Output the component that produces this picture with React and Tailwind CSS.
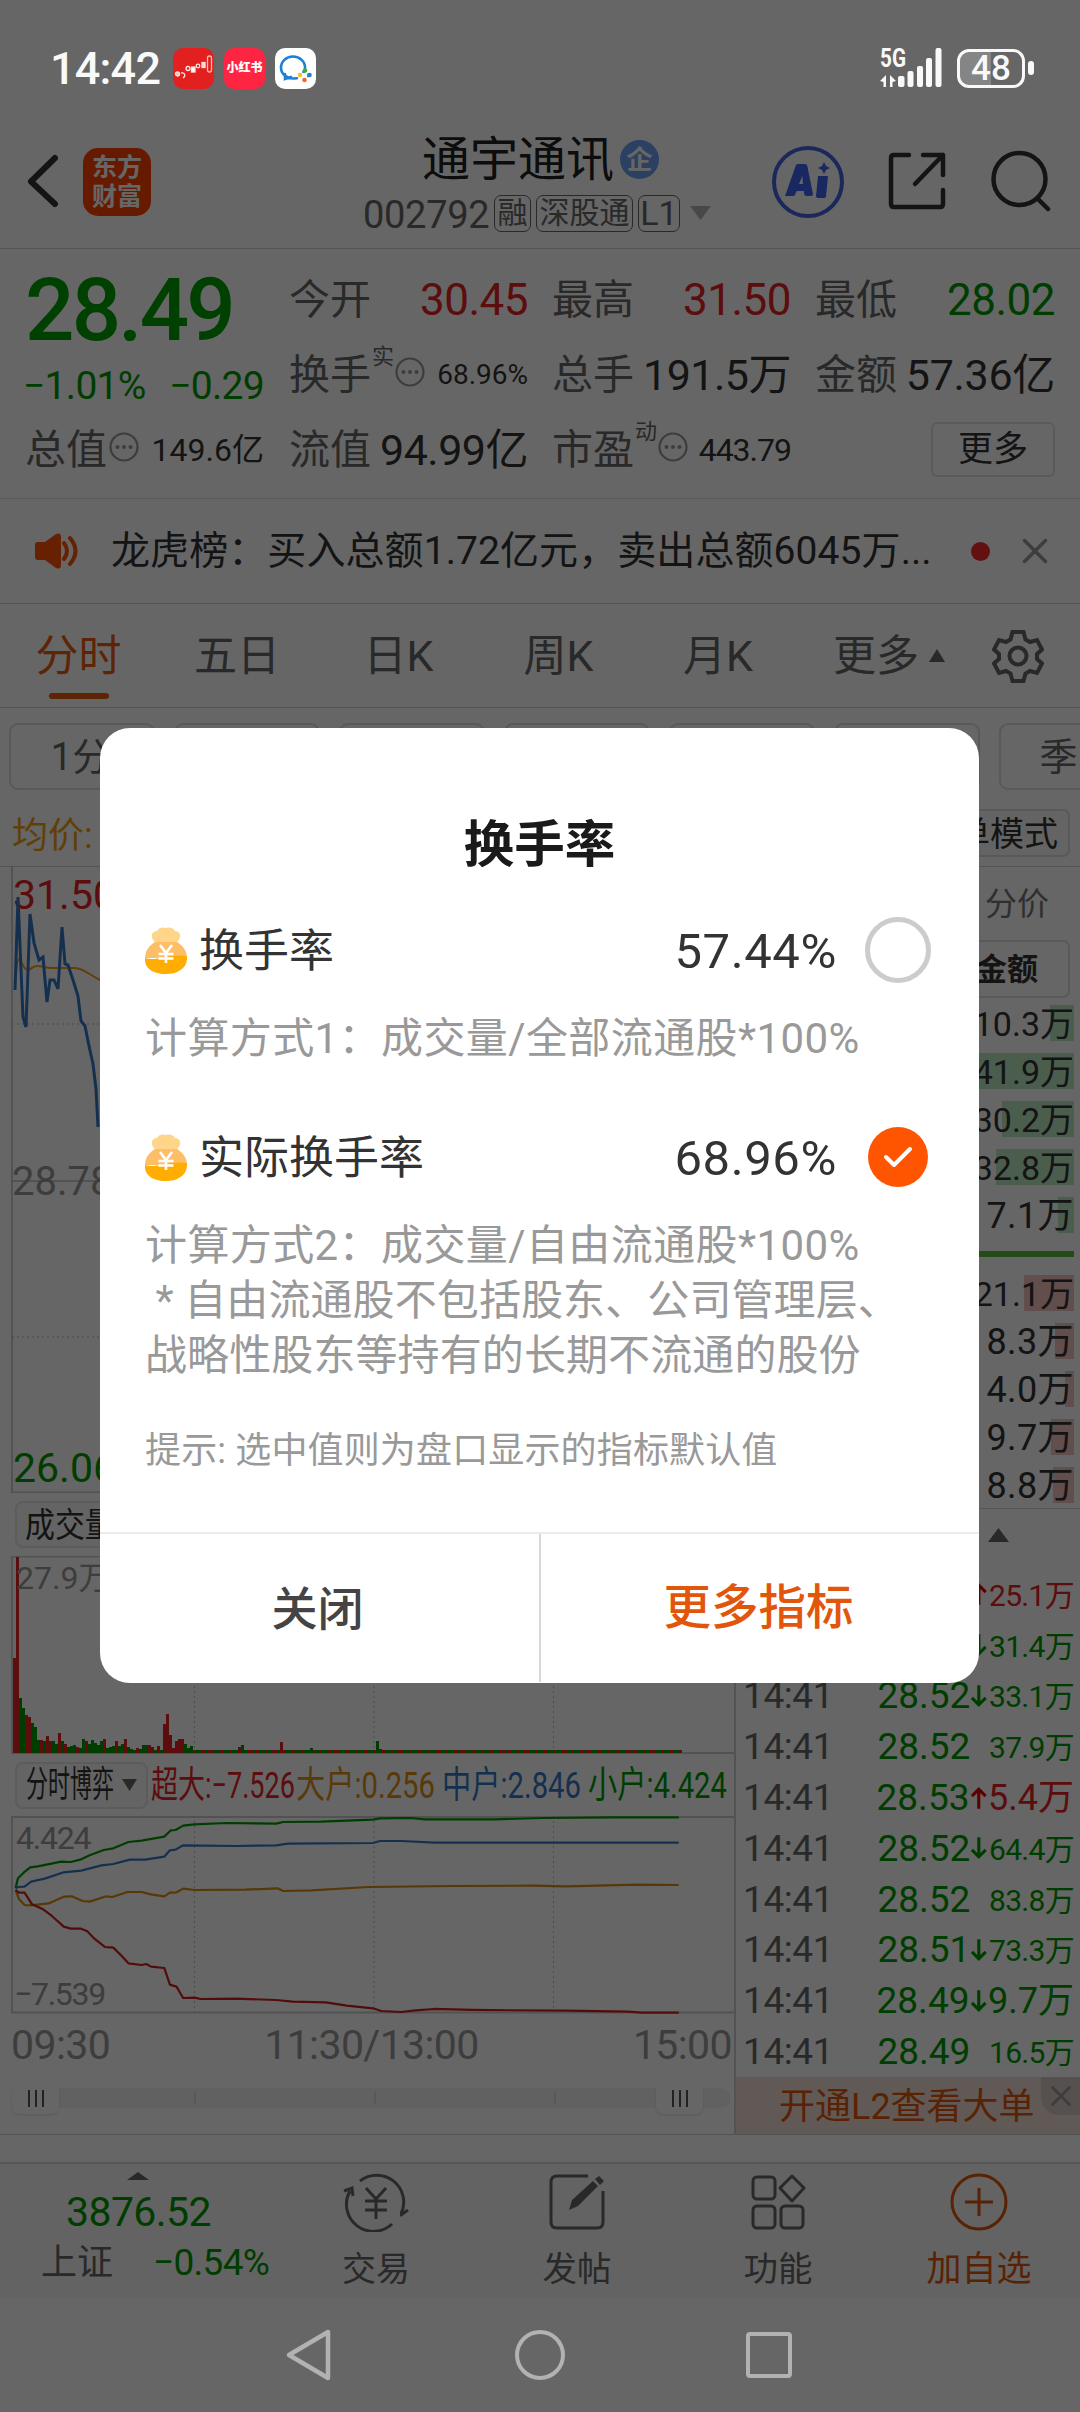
import { X } from "lucide-react"

const volume = [
  "r95", "r196", "g55", "g45", "r38", "r36", "g30", "g26", "g13", "r13", "g12", "r17", "r12", "g12", "g9",
  "r20", "g12", "r9", "g6", "g7", "g8", "r6", "g5", "g14", "r12", "g9", "g13", "g10", "g8", "g12",
  "r14", "g5", "g6", "g7", "r12", "g7", "g9", "r14", "g6", "g4", "g3", "r5", "g4", "g8", "g8",
  "r8", "r6", "g3", "r7", "g3", "r29", "r39", "r18", "r5", "r12", "r14", "r14", "g9", "g5", "g7",
]

const spikes = { 75: "r6", 76: "g8", 89: "r11", 99: "g5", 121: "g12", 122: "g4" }

for (let i = volume.length; i < 223; i++) {
  volume.push(spikes[i] || (i % 3 === 0 || i % 7 === 2 ? "r3" : "g3"))
}

const flows = [
  {
    color: "#009a00",
    points: "33,415 38,385 50,368 64,352 80,349 130,335 150,336 172,328 190,316 220,300 240,295 272,276 300,272 348,260 362,241 372,240 388,227 412,223 480,219 585,221 600,216 680,215 790,209 805,205 870,204 900,208 1050,208 1150,204 1300,202 1438,202",
  },
  {
    color: "#3579c6",
    points: "33,415 38,411 52,410 66,395 95,386 135,367 172,362 215,346 240,342 275,329 308,329 348,320 360,301 372,299 388,286 500,288 585,286 610,281 790,279 805,273 850,273 920,278 1438,278",
  },
  {
    color: "#d98c10",
    points: "33,420 40,447 52,465 64,466 104,460 135,440 152,439 175,453 190,455 225,439 238,441 270,426 300,426 320,433 348,439 360,428 374,427 388,416 412,420 520,419 588,415 600,423 660,421 780,411 960,408 1130,407 1200,409 1350,404 1438,405",
  },
  {
    color: "#d02020",
    points: "33,420 40,428 52,428 68,463 90,477 110,498 135,530 150,536 172,536 185,544 200,566 222,591 240,593 258,618 272,640 300,645 310,642 320,650 348,654 360,704 374,710 388,744 412,743 425,747 500,746 585,750 620,755 690,757 735,767 790,775 808,783 850,786 880,781 920,777 1000,780 1200,782 1330,785 1360,788 1438,788",
  },
]

const buyRows = [
  { amount: "10.3万", bar: 24 },
  { amount: "41.9万", bar: 102 },
  { amount: "30.2万", bar: 72 },
  { amount: "32.8万", bar: 78 },
  { amount: "7.1万", bar: 16 },
]

const sellRows = [
  { amount: "21.1万", bar: 50 },
  { amount: "8.3万", bar: 19 },
  { amount: "4.0万", bar: 9 },
  { amount: "9.7万", bar: 23 },
  { amount: "8.8万", bar: 21 },
]

const trades = [
  { price: "28.53", dir: "up", amount: "25.1万" },
  { price: "28.52", dir: "down", amount: "31.4万" },
  { price: "28.52", dir: "down", amount: "33.1万" },
  { price: "28.52", dir: "", amount: "37.9万" },
  { price: "28.53", dir: "up", amount: "5.4万" },
  { price: "28.52", dir: "down", amount: "64.4万" },
  { price: "28.52", dir: "", amount: "83.8万" },
  { price: "28.51", dir: "down", amount: "73.3万" },
  { price: "28.49", dir: "down", amount: "9.7万" },
  { price: "28.49", dir: "", amount: "16.5万" },
]

function StatusBar() {
  return (
    <div className="relative z-20 flex h-[108px] items-center pt-[28px] pl-[50px] pr-[46px] text-[#f9f9f9]">
      <span className="w-[123px] text-[45px] font-medium leading-none tracking-[-0.800px]">14:42</span>
      <div className="flex gap-[10px]">
        <div className="h-[41px] w-[41px] rounded-[10px] bg-[#e2201f]">
          <svg viewBox="0 0 41 41" className="h-full w-full" fill="none" stroke="#ffe3e0" strokeWidth="1.300">
            <circle cx="4.500" cy="26" r="2" fill="#fbb" />
            <path d="M8 25c4-1 5 3 2 5" />
            <circle cx="15" cy="20.500" r="2" />
            <rect x="18.500" y="19" width="3.500" height="5" fill="#fff" />
            <circle cx="25" cy="18" r="1.800" />
            <rect x="29" y="14.500" width="3" height="5" fill="#fcc" />
            <rect x="34.500" y="8" width="4" height="16" rx="2" stroke="#fba" />
          </svg>
        </div>
        <div className="flex h-[41px] w-[41px] items-center justify-center rounded-[10px] bg-[#ff2442] text-[12px] font-black leading-none text-white">
          小红书
        </div>
        <div className="h-[41px] w-[41px] rounded-[10px] bg-white">
          <svg viewBox="0 0 41 41" className="h-full w-full" fill="none">
            <path d="M30 20a12 11 0 1 0-11 10.500l3-.3M10 26l0 5 6-2" stroke="#1d7fd6" strokeWidth="2.600" strokeLinecap="round" />
            <path d="M28 25l2-3M32 28l3-1" stroke="#1d7fd6" strokeWidth="3" />
            <circle cx="30" cy="22.500" r="2.300" fill="#3fae2a" />
            <circle cx="34.500" cy="27" r="2.300" fill="#1d7fd6" />
            <circle cx="29.500" cy="32" r="2.300" fill="#ef6a2a" />
            <circle cx="25" cy="27" r="2.300" fill="#fbc02d" />
            <circle cx="29.800" cy="27.200" r="2.300" fill="#fff" />
          </svg>
        </div>
      </div>
      <svg viewBox="0 0 62 40" className="ml-auto h-[40px] w-[62px] overflow-visible" fill="#f9f9f9">
        <text x="0" y="19" fontSize="26" fontWeight="700" textLength="26" lengthAdjust="spacingAndGlyphs">5G</text>
        <path d="M0 33l6-6v12h-2.500v-5zM16 33l-6-6v12h2.500v-5z" />
        <rect x="18" y="28" width="6.500" height="11" rx="2" />
        <rect x="27.500" y="23" width="6" height="16" rx="2" />
        <rect x="37" y="18" width="6" height="21" rx="2" />
        <rect x="46" y="10" width="6" height="29" rx="2" />
        <rect x="55.500" y="0" width="6" height="39" rx="2" />
      </svg>
      <div className="ml-[15px] flex h-[39px] w-[68px] items-center justify-center rounded-[12px] border-[3px] border-[#f9f9f9] bg-[linear-gradient(90deg,#858585_50%,transparent_50%)] text-[35px] font-medium leading-none">
        48
      </div>
      <div className="ml-[3px] h-[14px] w-[6px] rounded-[3px] bg-[#f9f9f9]" />
    </div>
  )
}

function Header() {
  return (
    <div className="flex h-[141px] items-start border-b border-[#d0d0d0]">
      <svg viewBox="0 0 32 54" className="ml-[27px] mt-[46px] h-[54px] w-[32px]" fill="none" stroke="#333" strokeWidth="6" strokeLinecap="round" strokeLinejoin="round">
        <path d="M28 4L4 27.500l24 22.500" />
      </svg>
      <div className="ml-[24px] mt-[40px] flex h-[68px] w-[68px] flex-col items-center justify-center rounded-[15px] bg-[#ff4400] text-[25px] font-bold leading-[29px] text-white">
        <span>东方</span>
        <span>财富</span>
      </div>
      <div className="ml-[211px] mt-[21px] flex w-[355px] flex-col items-start">
        <div className="ml-[60px] flex h-[60px] items-center pt-[1px] text-[48px] leading-none text-[#222]">
          通宇通讯
          <span className="ml-[6px] flex h-[39px] w-[39px] items-center justify-center rounded-full bg-[#6ea0f5] text-[26px] font-bold text-white">企</span>
        </div>
        <div className="mt-[5px] flex h-[38px] items-center text-[38px] leading-none text-[#666]">
          <span className="w-[132px] pt-[3px] pl-[1px] tracking-[-0.300px]">002792</span>
          <span className="mr-[5px] flex h-[37px] w-[37px] items-center justify-center rounded-[7px] border border-[#666] text-[30px]">融</span>
          <span className="mr-[5px] flex h-[37px] w-[97px] items-center justify-center rounded-[7px] border border-[#666] text-[30px]">深股通</span>
          <span className="flex h-[37px] w-[42px] items-center justify-center rounded-[7px] border border-[#666] text-[34px]">L1</span>
          <svg viewBox="0 0 21 14" className="ml-[10px] h-[14px] w-[21px]" fill="#b5b5b5">
            <path d="M0 0h21L10.500 14z" />
          </svg>
        </div>
      </div>
      <svg viewBox="0 0 74 74" className="ml-[54px] mt-[37px] h-[74px] w-[74px]">
        <circle cx="37" cy="37" r="34" fill="none" stroke="#4364e0" strokeWidth="4" />
        <path d="M14 51L25 20q.5-1 2-1h7q2 0 2.300 2L42 49q0 2-2 2h-5q-1.500 0-1.800-2l-.5-3h-7l-1.500 3.500q-.8 1.500-2 1.500zM28 39h4l-.7-8z" fill="#4364f5" fillRule="evenodd" />
        <path d="M47 31h9q1 0 1 1l-2 19q0 2-2 2h-6q-2 0-2-2z" fill="#4364f5" />
        <path d="M53 17l2 4 4 2-4 2-2 4-2-4-4-2 4-2z" fill="#4364f5" />
      </svg>
      <svg viewBox="0 0 60 60" className="ml-[42px] mt-[43px] h-[60px] w-[60px]" fill="none" stroke="#333" strokeWidth="4.500" strokeLinecap="round" strokeLinejoin="round">
        <path d="M22 4H7q-3 0-3 3v46q0 3 3 3h46q3 0 3-3V39M36 4h20v20M56 4L28 33" />
      </svg>
      <svg viewBox="0 0 60 62" className="ml-[44px] mt-[42px] h-[62px] w-[60px]" fill="none" stroke="#333" strokeWidth="4.500" strokeLinecap="round">
        <circle cx="28.500" cy="29" r="26" />
        <path d="M47 49l10 10" />
      </svg>
    </div>
  )
}

function InfoDot({ className }) {
  return (
    <svg viewBox="0 0 30 30" className={className} fill="#999">
      <circle cx="15" cy="15" r="13.500" fill="none" stroke="#999" strokeWidth="2.200" />
      <circle cx="8.500" cy="15" r="2" />
      <circle cx="15" cy="15" r="2" />
      <circle cx="21.500" cy="15" r="2" />
    </svg>
  )
}

function Cell({ label, sup, info, value, className }) {
  return (
    <div className="flex h-[75px] items-center justify-between pt-[1px] leading-none">
      <div className="flex items-center text-[41px] text-[#666]">
        {label}
        {sup && <span className="-mt-[36px] ml-[1px] text-[22px]">{sup}</span>}
        {info && <InfoDot className={sup ? "-mt-[7px] ml-[1px] h-[30px] w-[30px]" : "-mt-[7px] ml-[2px] h-[30px] w-[30px]"} />}
      </div>
      <span className={className}>{value}</span>
    </div>
  )
}

function Quote() {
  return (
    <div className="grid h-[250px] grid-cols-[239px_238px_237px_238px] gap-x-[26px] border-b border-[#e0e0e0] pl-[25px] pt-[13px]">
      <div>
        <div className="flex h-[95px] items-center pt-[2px] text-[87px] font-medium leading-none tracking-[-2.800px] text-[#00a000]">28.49</div>
        <div className="flex h-[55px] items-center justify-between pt-[3px] text-[39px] leading-none tracking-[-0.700px] text-[#009a00]">
          <span className="-ml-[2px]">−1.01%</span>
          <span>−0.29</span>
        </div>
        <Cell label="总值" info value="149.6亿" className="text-[32px] text-[#333]" />
      </div>
      <div className="-ml-[1px]">
        <Cell label="今开" value="30.45" className="text-[44px] tracking-[-0.500px] text-[#e62222]" />
        <Cell label="换手" sup="实" info value="68.96%" className="text-[28px] text-[#333]" />
        <Cell label="流值" value="94.99亿" className="text-[43px] tracking-[-0.500px] text-[#333]" />
      </div>
      <div className="-ml-[2px]">
        <Cell label="最高" value="31.50" className="text-[44px] tracking-[-0.500px] text-[#e62222]" />
        <Cell label="总手" value="191.5万" className="text-[43px] tracking-[-0.500px] text-[#333]" />
        <Cell label="市盈" sup="动" info value="443.79" className="text-[32px] tracking-[-1px] text-[#333]" />
      </div>
      <div className="-ml-[2px]">
        <Cell label="最低" value="28.02" className="text-[44px] tracking-[-0.500px] text-[#009a00]" />
        <Cell label="金额" value="57.36亿" className="text-[43px] tracking-[-0.300px] text-[#333]" />
        <div className="flex h-[75px] items-center justify-end">
          <div className="flex h-[55px] w-[124px] items-center justify-center rounded-[6px] border-2 border-[#e2e2e2] text-[35px] leading-none text-[#333]">更多</div>
        </div>
      </div>
    </div>
  )
}

function Notice() {
  return (
    <div className="flex h-[105px] items-center border-b border-[#cfcfcf] pl-[33px] pr-[24px]">
      <svg viewBox="0 0 46 38" className="h-[38px] w-[46px]" fill="#fc5404">
        <path d="M2 13q0-3 3-3h7L23 2q5-2 5 3v28q0 5-5 3l-11-8H5q-3 0-3-3z" />
        <path d="M31 11q6 8 0 16M37 6q11 13 0 26" fill="none" stroke="#fc5404" strokeWidth="4" strokeLinecap="round" />
      </svg>
      <span className="ml-[32px] whitespace-nowrap text-[39px] leading-none tracking-[0.080px] text-[#333]">龙虎榜：买入总额1.72亿元，卖出总额6045万...</span>
      <span className="ml-auto h-[19px] w-[19px] rounded-full bg-[#f52828]" />
      <X className="ml-[24px] h-[42px] w-[42px] text-[#999]" strokeWidth={2} />
    </div>
  )
}

function Tabs() {
  return (
    <div className="flex h-[104px] items-center border-b border-[#cfcfcf] text-[43px] leading-none text-[#666]">
      <div className="flex h-full w-[157px] flex-col items-center justify-between pb-[8px] pt-[31px] text-[#eb5a0f]">
        分时
        <span className="h-[6px] w-[60px] rounded-full bg-[#eb5a0f]" />
      </div>
      <span className="w-[160px] pt-[2px] text-center">五日</span>
      <span className="w-[163px] pt-[2px] text-center">日K</span>
      <span className="w-[157px] pt-[2px] text-center">周K</span>
      <span className="w-[162px] pt-[2px] text-center">月K</span>
      <span className="ml-[34px] pt-[2px]">更多</span>
      <svg viewBox="0 0 16 13" className="ml-[10px] h-[13px] w-[16px]" fill="#666">
        <path d="M8 0l8 13H0z" />
      </svg>
      <svg viewBox="0 0 52 54" className="ml-[47px] h-[54px] w-[52px]" fill="none" stroke="#666" strokeWidth="4">
        <path d="M20.500 3h11l2 7.500 4.500 2.500 7-2 5 9.500-5 4.500v5l5 4.500-5 9.500-7-2-4.500 2.500-2 7.500h-11l-2-7.500-4.500-2.500-7 2-5-9.500 5-4.500v-5l-5-4.500 5-9.500 7 2 4.500-2.500z" />
        <circle cx="26" cy="27" r="8.500" />
      </svg>
    </div>
  )
}

function Periods() {
  const periods = ["1分", "5分", "15分", "30分", "60分", "120分", "季K"]
  return (
    <div className="flex h-[82px] gap-[19px] overflow-hidden pl-[9px] pt-[15px]">
      {periods.map((p) => (
        <div key={p} className="flex h-[67px] w-[146px] shrink-0 items-center justify-center rounded-[9px] border-2 border-[#dedede] pr-[3px] text-[38px] leading-none text-[#666]">
          {p}
        </div>
      ))}
    </div>
  )
}

function PriceChart() {
  return (
    <svg viewBox="0 867 734 626" className="block h-[626px] w-[734px]">
      <path d="M12 867V1492.500H734" fill="none" stroke="#ccc" strokeWidth="2" />
      <path d="M12 1024H734M12 1337H734" stroke="#bbb" strokeDasharray="2 3" />
      <path d="M12 1181H734" stroke="#bbb" strokeWidth="1.500" />
      <text x="13" y="909" fontSize="41" fill="#e62222">31.50</text>
      <text x="12" y="1195" fontSize="40" fill="#999">28.78</text>
      <text x="13" y="1482" fontSize="41" fill="#009a00">26.06</text>
      <path d="M15 985q2-26 4-26c3 1 4 11 9 11 3 0 4-4 9-4 6 0 8 2 15 2h22c10 0 15 7 28 13" fill="none" stroke="#f0a012" strokeWidth="2" />
      <path d="M15 990l3-93 5 120 3 10 4-113 4 29 5 17 4-3 4 45 3-22 4 0 4 9 4-62 3 37 3 1 5 15 5 16 3 25 4 5 4 20 4 18 3 25 2 38" fill="none" stroke="#3579c6" strokeWidth="3" />
    </svg>
  )
}

function VolumeChart() {
  return (
    <svg viewBox="0 0 734 198" className="block h-[198px] w-[734px]">
      <path d="M734 .5H12V197H734" fill="none" stroke="#ccc" strokeWidth="2" />
      <path d="M194.500 0V198M374 0V198M553.500 0V198" stroke="#bbb" strokeDasharray="2 3" />
      {volume.map((v, i) => {
        const h = Number(v.slice(1))
        return <rect key={i} x={13 + i * 3} y={197 - h} width="3" height={h} fill={v[0] === "r" ? "#e62222" : "#009a00"} />
      })}
      <text x="16" y="33" fontSize="32" fill="#999">27.9万</text>
    </svg>
  )
}

function FlowChart() {
  return (
    <svg viewBox="0 0 734 198" className="block h-[198px] w-[734px]">
      <path d="M734 1H12V196.500H734" fill="none" stroke="#ccc" strokeWidth="2" />
      <path d="M194.500 0V198M374 0V198M553.500 0V198" stroke="#bbb" strokeDasharray="2 3" />
      <g fill="none" strokeWidth="2.200" strokeLinejoin="round" transform="translate(0 -66) scale(0.472 0.3333)">
        {flows.map((f) => (
          <polyline key={f.color} points={f.points} stroke={f.color} vectorEffect="non-scaling-stroke" />
        ))}
      </g>
      <text x="16" y="33" fontSize="32" letterSpacing="-1.200" fill="#999">4.424</text>
      <text x="14" y="189" fontSize="32" letterSpacing="-1.300" fill="#999">−7.539</text>
    </svg>
  )
}

function Handle({ className }) {
  return (
    <div className={className}>
      <span className="h-[17px] w-[2px] bg-[#555]" />
      <span className="h-[17px] w-[2px] bg-[#555]" />
      <span className="h-[17px] w-[2px] bg-[#555]" />
    </div>
  )
}

function Charts() {
  return (
    <div className="w-[734px] shrink-0 whitespace-nowrap leading-none">
      <PriceChart />
      <div className="flex h-[63px] items-center pl-[15px]">
        <div className="flex h-[47px] w-[140px] items-center rounded-[8px] border-2 border-[#e6e6e6] bg-[#fbfbfb] pl-[8px] text-[34px] text-[#333]">
          <span className="origin-left scale-x-88">成交量</span>
        </div>
      </div>
      <VolumeChart />
      <div className="flex h-[62px] items-center pl-[15px] text-[36px]">
        <div className="flex h-[47px] w-[133px] items-center rounded-[8px] border-2 border-[#e6e6e6] bg-[#fbfbfb] pl-[9px] text-[#333]">
          <span className="w-[96px] origin-left scale-x-61">分时博弈</span>
          <svg viewBox="0 0 15 12" className="h-[12px] w-[15px] shrink-0" fill="#666">
            <path d="M0 0h15L7.500 12z" />
          </svg>
        </div>
        <span className="ml-[3px] w-[145px] origin-left scale-x-[0.73] text-[37px] text-[#e62222]">超大:−7.526</span>
        <span className="w-[146px] origin-left scale-x-[0.79] text-[37px] text-[#e08e10]">大户:0.256</span>
        <span className="w-[146px] origin-left scale-x-[0.79] text-[37px] text-[#3579c6]">中户:2.846</span>
        <span className="w-[140px] origin-left scale-x-[0.79] text-[37px] text-[#009a00]">小户:4.424</span>
      </div>
      <FlowChart />
      <div className="flex h-[60px] items-center justify-between pl-[11px] pr-[2px] pt-[2px] text-[41px] tracking-[-0.600px] text-[#999]">
        <span>09:30</span>
        <span>11:30/13:00</span>
        <span>15:00</span>
      </div>
      <div className="flex h-[48px] items-center pl-[12px] pr-[3px]">
        <div className="flex h-[20px] w-full items-center rounded-full bg-[#f3f3f3]">
          <Handle className="flex h-[31px] w-[47px] items-center justify-center gap-[5px] rounded-[7px] bg-white shadow-sm" />
          <span className="ml-[135px] h-[12px] w-[2px] bg-[#dcdcdc]" />
          <span className="ml-[178px] h-[12px] w-[2px] bg-[#dcdcdc]" />
          <span className="ml-[178px] h-[12px] w-[2px] bg-[#dcdcdc]" />
          <Handle className="ml-[100px] flex h-[31px] w-[47px] items-center justify-center gap-[5px] rounded-[7px] bg-white shadow-sm" />
        </div>
      </div>
    </div>
  )
}

function Arrow({ dir }) {
  if (!dir) return <span className="w-[20px]" />
  return (
    <svg viewBox="0 0 20 24" className="h-[24px] w-[20px]" fill="none" stroke={dir === "up" ? "#e60000" : "#009a00"} strokeWidth="3.200">
      <path d={dir === "up" ? "M10 23V3M3 10l7-7 7 7" : "M10 1v20M3 14l7 7 7-7"} />
    </svg>
  )
}

function OrderRow({ row, className }) {
  return (
    <div className="flex h-[36px] w-full justify-end">
      <div className={className} style={{ width: row.bar }}>
        <span className={row.amount.length === 4 ? "whitespace-nowrap text-[36px] tracking-[0.400px]" : "whitespace-nowrap text-[34px]"}>{row.amount}</span>
      </div>
    </div>
  )
}

function OrderBook() {
  return (
    <div className="min-w-0 flex-1 border-l-2 border-[#cfcfcf] leading-none">
      <div className="flex h-[73px] items-center justify-end pr-[31px] text-[32px] text-[#777]">分价</div>
      <div className="ml-auto mr-[10px] flex h-[58px] w-[120px] items-center justify-end rounded-[7px] border-2 border-[#dedede] pr-[30px] text-[31px] font-bold text-[#333]">
        金额
      </div>
      <div className="flex h-[511px] flex-col gap-[12px] border-b border-[#d8d8d8] pr-[6px] pt-[7px]">
        {buyRows.map((row) => (
          <OrderRow key={row.amount} row={row} className="flex items-center justify-end bg-[#bce8be] pt-[2px] text-[#333]" />
        ))}
        <div className="my-[6px] h-[6px] w-full shrink-0 bg-[#5fb83c]" />
        {sellRows.map((row) => (
          <OrderRow key={row.amount} row={row} className="flex items-center justify-end bg-[#f4c3be] pt-[2px] text-[#333]" />
        ))}
      </div>
      <div className="flex h-[60px] items-start justify-end pr-[71px] pt-[19px]">
        <svg viewBox="0 0 21 14" className="h-[14px] w-[21px]" fill="#666">
          <path d="M10.500 0L21 14H0z" />
        </svg>
      </div>
      {trades.map((t, i) => (
        <div key={i} className="flex h-[50.800px] items-center pl-[7px] pr-[6px]">
          <span className="w-[137px] text-[37px] tracking-[-0.400px] text-[#666]">14:41</span>
          <span className="w-[92px] text-[37px] text-[#009a00]">{t.price}</span>
          <Arrow dir={t.dir} />
          <span className={`flex-1 whitespace-nowrap text-right ${t.amount.length === 4 ? "text-[36px]" : "pt-[3px] text-[30px] tracking-[-0.700px]"} ${t.dir === "up" ? "text-[#e62222]" : "text-[#009a00]"}`}>
            {t.amount}
          </span>
        </div>
      ))}
      <div className="flex h-[57px] items-start bg-[#f1ded4] pl-[43px]">
        <span className="flex h-full items-center whitespace-nowrap pt-[4px] text-[36px] text-[#e2560c]">开通L2查看大单</span>
        <div className="ml-auto flex h-[38px] w-[39px] shrink-0 items-center justify-center rounded-bl-[18px] bg-[#d6cac4]">
          <X className="h-[34px] w-[34px] text-[#999]" strokeWidth={2} />
        </div>
      </div>
    </div>
  )
}

function BottomBar() {
  return (
    <div className="flex h-[136px] border-t-2 border-[#d6d6d6] bg-[#f8f8f8] leading-none text-[#666]">
      <div className="flex w-[313px] flex-col pt-[8px]">
        <svg viewBox="0 0 22 8" className="ml-[127px] h-[8px] w-[22px]" fill="#666">
          <path d="M11 0l11 8H0z" />
        </svg>
        <span className="ml-[66px] mt-[12px] text-[41px] tracking-[-0.600px] text-[#009a00]">3876.52</span>
        <div className="mt-[11px] flex items-center pl-[41px]">
          <span className="w-[112px] text-[36px]">上证</span>
          <span className="text-[37px] tracking-[-0.700px] text-[#009a00]">−0.54%</span>
        </div>
      </div>
      <div className="flex w-[126px] flex-col items-center gap-[20px] pt-[8px] text-[34px]">
        <svg viewBox="0 0 66 60" className="h-[60px] w-[66px]" fill="none" stroke="#666" strokeWidth="3">
          <path d="M17 9a27 27 0 0 1 41 33M49 52a27 27 0 0 1-42-33M1 19l8-3 1 8M57 43l1 0 7-5" />
          <path d="M23 16l10 11 10-11M33 27v20M22 29h22M22 38h22" />
        </svg>
        交易
      </div>
      <div className="ml-[75px] flex w-[126px] flex-col items-center gap-[20px] pt-[8px] text-[34.500px]">
        <svg viewBox="0 0 60 60" className="h-[60px] w-[60px]" fill="none" stroke="#666" strokeWidth="3">
          <path d="M41 4H10q-6 0-6 6v40q0 6 6 6h40q6 0 6-6V19" />
          <path d="M22 38l3-10L46 9l5 5-20 20zM48 7l4-3 5 5-4 4z" fill="#666" stroke="none" />
        </svg>
        发帖
      </div>
      <div className="ml-[75px] flex w-[126px] flex-col items-center gap-[20px] pt-[8px] text-[34.500px]">
        <svg viewBox="0 0 60 60" className="h-[60px] w-[60px]" fill="none" stroke="#666" strokeWidth="3" strokeLinejoin="round">
          <rect x="5" y="5" width="22" height="22" rx="4" />
          <rect x="5" y="34" width="22" height="22" rx="4" />
          <rect x="33" y="34" width="22" height="22" rx="4" />
          <path d="M44 4l12 12-12 13-12-13z" />
        </svg>
        功能
      </div>
      <div className="ml-[75px] flex w-[126px] flex-col items-center gap-[20px] pt-[8px] text-[35px] text-[#e0560c]">
        <svg viewBox="0 0 60 60" className="h-[60px] w-[60px]" fill="none" stroke="#e0560c" strokeWidth="3">
          <circle cx="30" cy="30" r="27" />
          <path d="M30 16v28M16 30h28" />
        </svg>
        加自选
      </div>
    </div>
  )
}

function NavKeys() {
  return (
    <div className="relative z-20 flex h-[114px] items-center">
      <svg viewBox="0 0 50 54" className="ml-[283px] h-[54px] w-[50px]" fill="none" stroke="#b2b2b2" strokeWidth="4.500" strokeLinejoin="round">
        <path d="M45 4v46L6 27z" />
      </svg>
      <div className="ml-[182px] h-[50px] w-[50px] rounded-full border-[4.500px] border-[#b2b2b2]" />
      <div className="ml-[181px] h-[46px] w-[46px] rounded-[4px] border-[4.500px] border-[#b2b2b2]" />
    </div>
  )
}

function MoneyBag() {
  return (
    <svg viewBox="0 0 42 47" className="h-[47px] w-[42px]">
      <path d="M10 15c-5-4-4-11 2-11 2-4 6-4 9-3 3-1 7-1 9 3 6 0 7 7 2 11z" fill="#ffd58a" />
      <path d="M0 31c0-8 5-13 10-16h22c5 3 10 8 10 16z" fill="#fdbe68" />
      <path d="M0 31c12 4 24-5 42-2 1 12-9 18-21 18S-1 42 0 31z" fill="#ffad00" />
      <path d="M15 18l6 8 6-8M21 26v10M13.500 27h15M13.500 31.500h15" fill="none" stroke="#fff" strokeWidth="2.600" />
    </svg>
  )
}

function Option({ label, value, checked }) {
  return (
    <div className="flex h-[66px] items-center text-[45px] leading-none text-[#333]">
      <MoneyBag />
      <span className="ml-[12px] pt-[2px]">{label}</span>
      <span className="ml-auto pr-[28px] pt-[2px] text-[49px] tracking-[0.600px]">{value}</span>
      {checked ? (
        <div className="ml-[3px] mr-[3px] flex h-[60px] w-[60px] items-center justify-center rounded-full bg-[#ff5500]">
          <svg viewBox="0 0 30 22" className="h-[22px] w-[30px]" fill="none" stroke="#fff" strokeWidth="4" strokeLinecap="round" strokeLinejoin="round">
            <path d="M3 11l8 8L27 3" />
          </svg>
        </div>
      ) : (
        <div className="h-[66px] w-[66px] rounded-full border-[5px] border-[#ccc]" />
      )}
    </div>
  )
}

function Dialog() {
  return (
    <div className="absolute inset-0 z-10 bg-black/60 pt-[728px]">
      <div className="ml-[100px] flex h-[955px] w-[879px] flex-col overflow-hidden rounded-[30px] bg-white">
        <h2 className="mt-[87px] h-[60px] text-center text-[50.500px] font-bold leading-[60px] text-[#1a1a1a]">换手率</h2>
        <div className="pl-[45px] pr-[48px] pt-[42px] text-[42px] leading-[55px] text-[#999]">
          <Option label="换手率" value="57.44%" />
          <p className="mt-[28px] whitespace-nowrap tracking-[0.400px]">计算方式1：成交量/全部流通股*100%</p>
          <div className="h-[58px]" />
          <Option label="实际换手率" value="68.96%" checked />
          <p className="mt-[28px] whitespace-nowrap tracking-[0.400px]">计算方式2：成交量/自由流通股*100%</p>
          <p className="whitespace-pre tracking-[0.100px]">{" * 自由流通股不包括股东、公司管理层、\n战略性股东等持有的长期不流通的股份"}</p>
          <p className="mt-[41px] text-[36px] tracking-[0.150px]">提示: 选中值则为盘口显示的指标默认值</p>
        </div>
        <div className="mt-auto flex h-[151px] shrink-0 border-t-2 border-[#ebebeb] pb-px text-[47.500px] font-medium">
          <button className="flex-1 border-r-2 border-[#d8d8d8] pt-[2px] pr-[4px] text-[46px] text-[#444]">关闭</button>
          <button className="flex-1 pt-[2px] pr-[3px] text-[#e2560c]">更多指标</button>
        </div>
      </div>
    </div>
  )
}

export default function App() {
  return (
    <div className="relative h-[2412px] w-[1080px] overflow-hidden bg-white font-['Roboto','Noto_Sans_CJK_SC',sans-serif]">
      <StatusBar />
      <Header />
      <Quote />
      <Notice />
      <Tabs />
      <Periods />
      <div className="flex h-[77px] items-center justify-between border-b border-[#cfcfcf] pl-[12px] pr-[10px] pt-[12px] leading-none">
        <span className="pt-[4px] text-[36px] text-[#f0a012]">均价: 28.86</span>
        <div className="-mt-[3px] flex h-[48px] items-center rounded-[7px] border-2 border-[#dedede] bg-[#fbfbfb] pl-[12px] pr-[10px] pt-[3px] text-[34px] text-[#333]">简单模式</div>
      </div>
      <div className="flex h-[1268px] border-b border-[#cfcfcf]">
        <Charts />
        <OrderBook />
      </div>
      <div className="h-[27px]" />
      <BottomBar />
      <NavKeys />
      <Dialog />
    </div>
  )
}
